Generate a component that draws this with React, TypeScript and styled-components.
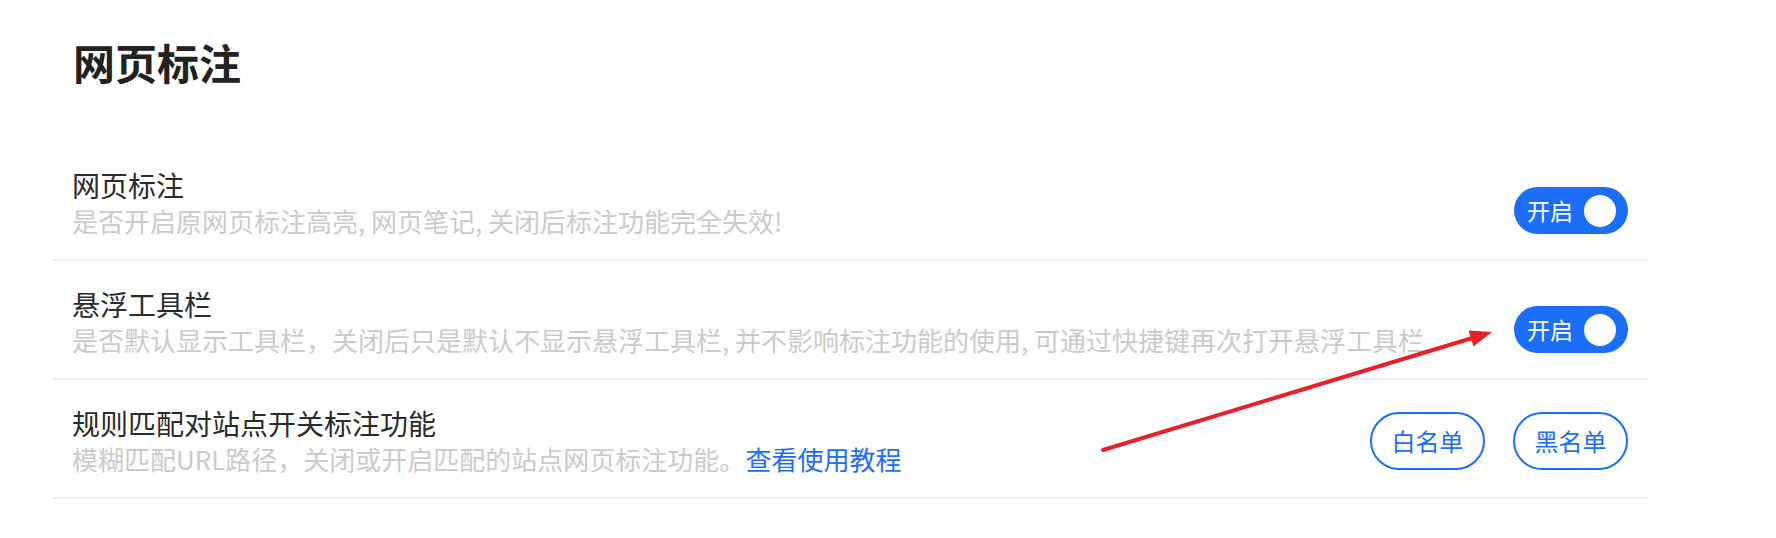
import React from "react";
import styled, { createGlobalStyle } from "styled-components";

const Global = createGlobalStyle`
  html, body { margin: 0; padding: 0; background: #ffffff; }
  body { font-family: "Noto Sans CJK SC", "Noto Sans", sans-serif; }
`;

const BLUE = "#1a6ef8";

const Page = styled.div`
  position: relative;
  width: 1776px;
  height: 538px;
  box-sizing: border-box;
  padding: 32px 0 0 52px;
  overflow: hidden;
  background: #fff;
`;

const Panel = styled.div`
  width: 1596px;
  display: flex;
  flex-direction: column;
`;

const Heading = styled.h1`
  margin: 0 0 50px 0;
  padding-left: 21px;
  font-size: 42px;
  line-height: 60px;
  font-weight: 700;
  color: #222222;
`;

const Row = styled.div`
  display: flex;
  align-items: center;
  justify-content: space-between;
  padding: 25px 20px 20px 20px;
  border-bottom: 2px solid #ebeff4;
`;

const TextCol = styled.div`
  display: flex;
  flex-direction: column;
`;

const RowTitle = styled.div`
  font-size: 28px;
  line-height: 36px;
  color: #2b2b2b;
`;

const RowDesc = styled.div`
  font-size: 26px;
  line-height: 36px;
  color: #cbcbcb;
  white-space: nowrap;
`;

const Link = styled.a`
  color: ${BLUE};
  text-decoration: none;
  cursor: pointer;
`;

const Toggle = styled.button`
  width: 114px;
  height: 47px;
  margin-top: 15px;
  box-sizing: border-box;
  border: none;
  border-radius: 24px;
  background: ${BLUE};
  display: flex;
  align-items: center;
  justify-content: space-between;
  padding: 0 12px 0 13px;
  color: #fff;
  font-family: inherit;
  font-size: 23px;
  line-height: 1;
  cursor: pointer;
`;

const Knob = styled.span`
  width: 32px;
  height: 32px;
  border-radius: 50%;
  background: #fff;
`;

const Buttons = styled.div`
  display: flex;
  gap: 28px;
`;

const OutlineButton = styled.button`
  width: 115px;
  height: 58px;
  box-sizing: border-box;
  border: 2px solid ${BLUE};
  border-radius: 29px;
  background: #fff;
  color: ${BLUE};
  font-family: inherit;
  font-size: 24px;
  line-height: 1;
  cursor: pointer;
`;

const ArrowOverlay = styled.svg`
  position: absolute;
  left: 0;
  top: 0;
  pointer-events: none;
`;

type Item = {
  title: string;
  desc: React.ReactNode;
  control: React.ReactNode;
};

const items: Item[] = [
  {
    title: "网页标注",
    desc: "是否开启原网页标注高亮, 网页笔记, 关闭后标注功能完全失效!",
    control: (
      <Toggle>
        开启
        <Knob />
      </Toggle>
    ),
  },
  {
    title: "悬浮工具栏",
    desc:
      "是否默认显示工具栏，关闭后只是默认不显示悬浮工具栏, 并不影响标注功能的使用, 可通过快捷键再次打开悬浮工具栏",
    control: (
      <Toggle>
        开启
        <Knob />
      </Toggle>
    ),
  },
  {
    title: "规则匹配对站点开关标注功能",
    desc: (
      <>
        模糊匹配URL路径，关闭或开启匹配的站点网页标注功能。
        <Link>查看使用教程</Link>
      </>
    ),
    control: (
      <Buttons>
        <OutlineButton>白名单</OutlineButton>
        <OutlineButton>黑名单</OutlineButton>
      </Buttons>
    ),
  },
];

export default function App() {
  return (
    <>
      <Global />
      <Page>
        <Panel>
          <Heading>网页标注</Heading>
          {items.map((it) => (
            <Row key={it.title}>
              <TextCol>
                <RowTitle>{it.title}</RowTitle>
                <RowDesc>{it.desc}</RowDesc>
              </TextCol>
              {it.control}
            </Row>
          ))}
        </Panel>
        <ArrowOverlay width="1776" height="538" viewBox="0 0 1776 538">
          <line
            x1="1103"
            y1="450"
            x2="1474"
            y2="337.5"
            stroke="#e8202a"
            strokeWidth="4"
            strokeLinecap="round"
          />
          <polygon points="1492,332 1468.5,330.5 1473.5,346.5" fill="#e8202a" />
        </ArrowOverlay>
      </Page>
    </>
  );
}
